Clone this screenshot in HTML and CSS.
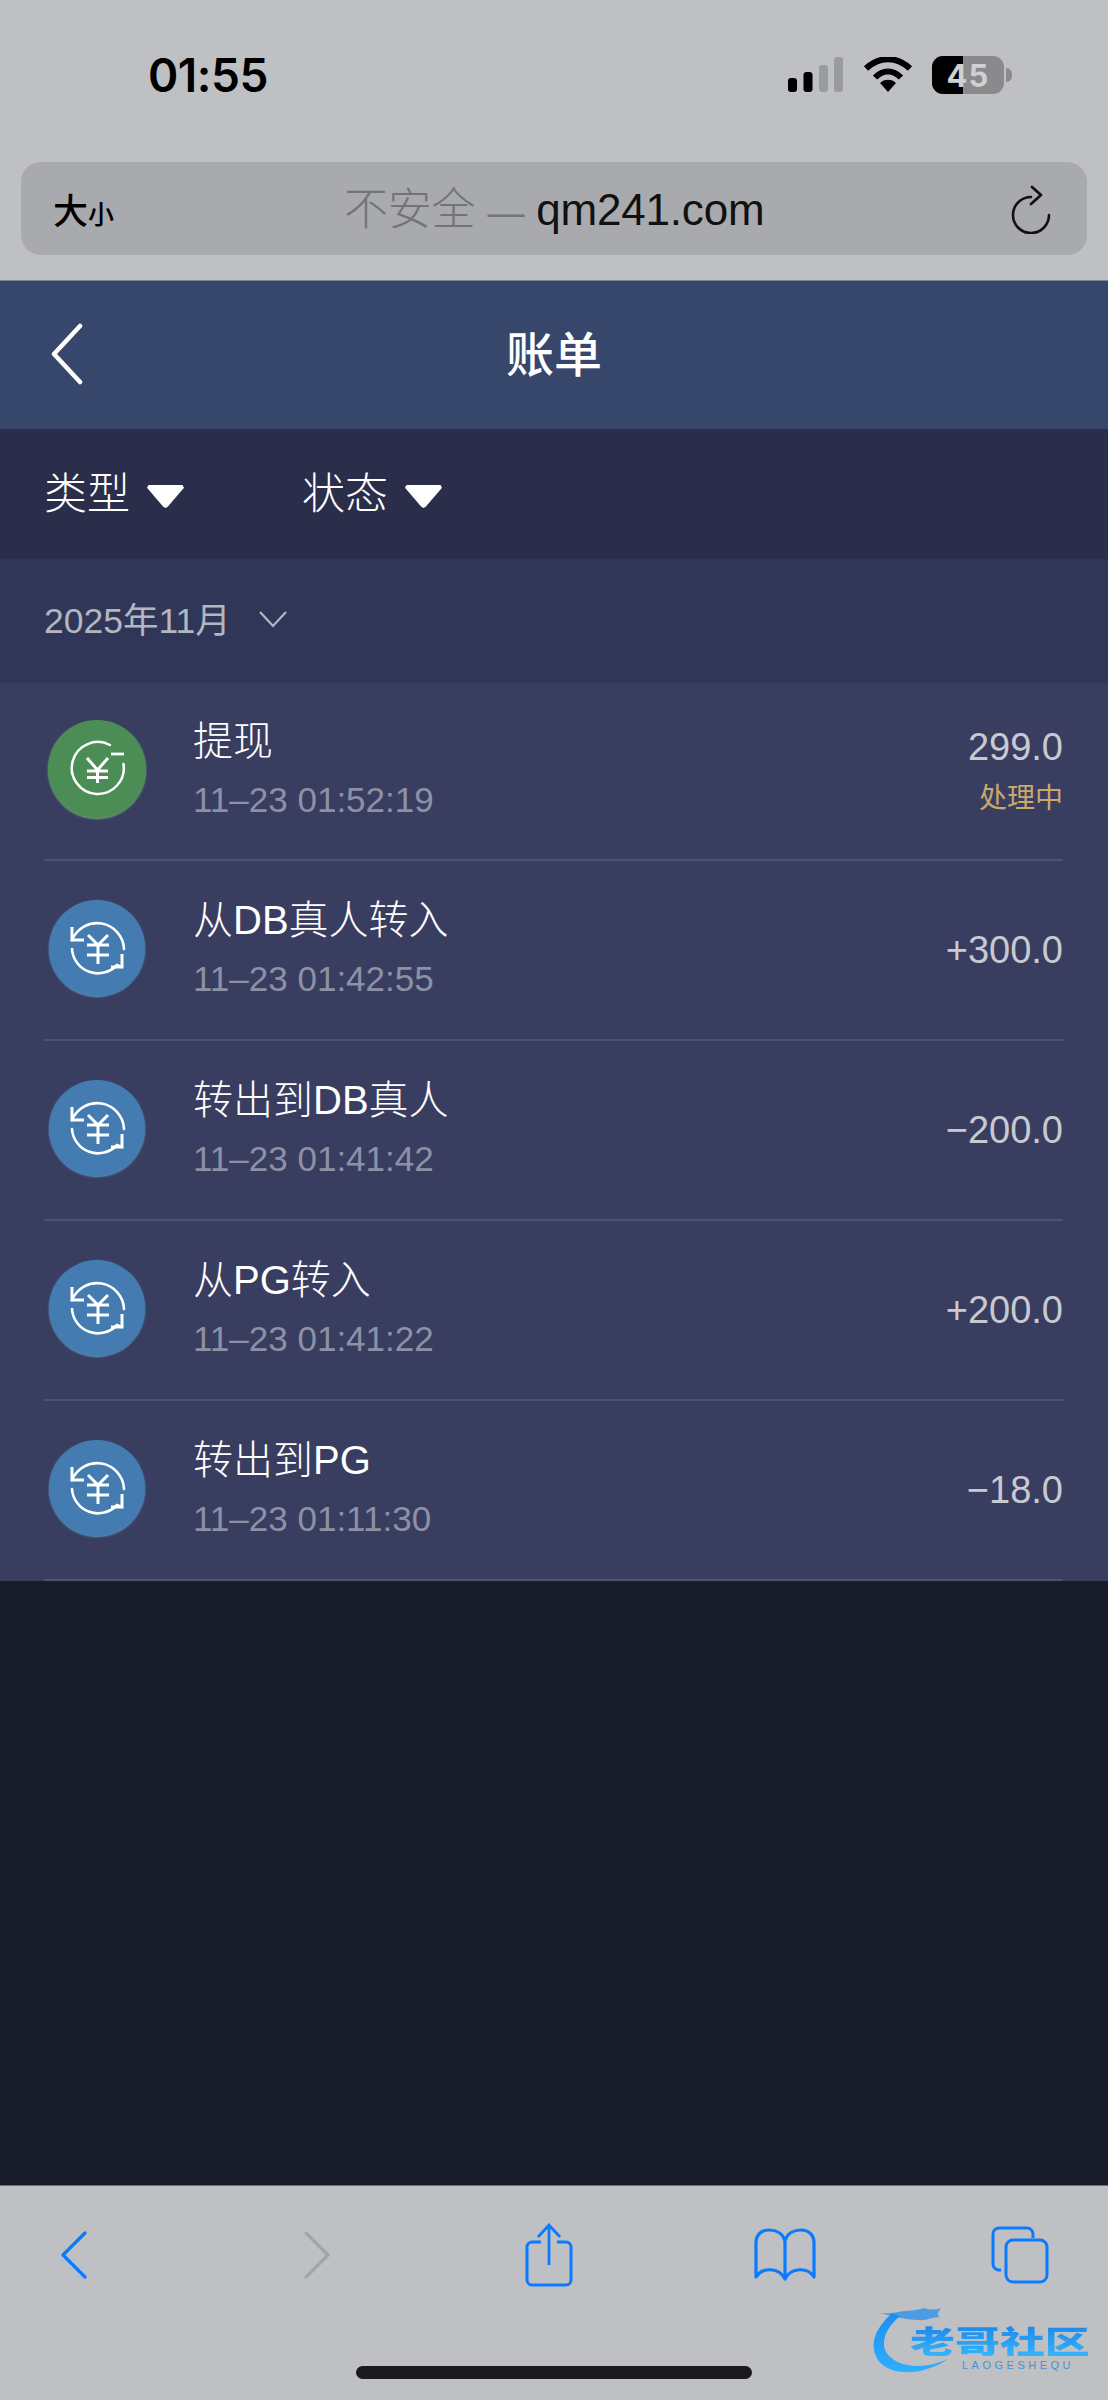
FILE: index.html
```html
<!DOCTYPE html>
<html lang="zh-CN">
<head>
<meta charset="utf-8">
<title>账单</title>
<link rel="stylesheet" href="styles.css">
</head>
<body>
<div class="screen">
  <div class="chrome-top">
    <div class="status">
      <span class="time">01:55</span>
      <div class="status-icons">
        <svg class="signal" width="56" height="36" viewBox="0 0 56 36"><rect x="0" y="21" width="9" height="14" rx="3" fill="#000"/><rect x="15.500" y="15" width="9" height="20" rx="3" fill="#000"/><rect x="31" y="8" width="9" height="27" rx="3" fill="#9a9b9e"/><rect x="46" y="0" width="9" height="35" rx="3" fill="#9a9b9e"/></svg>
        <svg class="wifi" width="50" height="36" viewBox="0 0 50 36"><path d="M3 11.500C16 -1 34 -1 47 11.500" fill="none" stroke="#000" stroke-width="6"/><path d="M12 20.500C20 12.500 30 12.500 38 20.500" fill="none" stroke="#000" stroke-width="6"/><path d="M17 26C21 21.500 29 21.500 33 26L25 35Z" fill="#000"/></svg>
        <div class="battery">
          <span class="battery-fill"></span>
          <span class="battery-text">45</span>
        </div>
        <span class="battery-tip"></span>
      </div>
    </div>
    <div class="urlbar">
      <span class="textsize">大<small>小</small></span>
      <span class="url"><span class="url-muted">不安全 <span class="url-dash">—</span> </span>qm241.com</span>
      <svg class="reload" width="42" height="50" viewBox="0 0 42 50"><path d="M20 13A18 18 0 1 0 38 31" fill="none" stroke="#111" stroke-width="2.600" stroke-linecap="round"/><path d="M21 3L30 11L20 20" fill="none" stroke="#111" stroke-width="2.800" stroke-linecap="round" stroke-linejoin="round"/></svg>
    </div>
  </div>

  <header class="nav">
    <svg class="nav-back" width="34" height="62" viewBox="0 0 34 62"><path d="M30 3L4 31L30 59" fill="none" stroke="#fff" stroke-width="4.500" stroke-linecap="round" stroke-linejoin="round"/></svg>
    <h1 class="nav-title">账单</h1>
  </header>

  <div class="filters">
    <div class="filter"><span>类型</span><i class="caret"></i></div>
    <div class="filter"><span>状态</span><i class="caret"></i></div>
  </div>

  <div class="month">
    <span>2025年11月</span>
    <svg class="month-chevron" width="30" height="18" viewBox="0 0 30 18"><path d="M2 2L15 16L28 2" fill="none" stroke="#b4b6c0" stroke-width="2.200"/></svg>
  </div>

  <ul class="list">
    <li class="row">
      <span class="badge badge-green">
        <svg width="60" height="60" viewBox="0 0 60 60"><path d="M43 6A26 26 0 1 0 56.500 25" fill="none" stroke="#fff" stroke-width="2.500" stroke-linecap="round"/><path d="M44 15H57" stroke="#fff" stroke-width="2.800"/><path d="M20 19L30.500 31L41 19M30.500 31V44M20 32H41M20 38.500H41" fill="none" stroke="#fff" stroke-width="3"/></svg>
      </span>
      <div class="info info-green"><div class="title">提现</div><div class="date">11–23 01:52:19</div></div>
      <div class="amount"><div class="value">299.0</div><div class="state">处理中</div></div>
    </li>
    <li class="row">
      <span class="badge badge-blue">
        <svg width="60" height="60" viewBox="0 0 60 60"><use href="#swap"/></svg>
      </span>
      <div class="info"><div class="title">从DB真人转入</div><div class="date">11–23 01:42:55</div></div>
      <div class="amount"><div class="value">+300.0</div></div>
    </li>
    <li class="row">
      <span class="badge badge-blue">
        <svg width="60" height="60" viewBox="0 0 60 60"><use href="#swap"/></svg>
      </span>
      <div class="info"><div class="title">转出到DB真人</div><div class="date">11–23 01:41:42</div></div>
      <div class="amount"><div class="value">−200.0</div></div>
    </li>
    <li class="row">
      <span class="badge badge-blue">
        <svg width="60" height="60" viewBox="0 0 60 60"><use href="#swap"/></svg>
      </span>
      <div class="info"><div class="title">从PG转入</div><div class="date">11–23 01:41:22</div></div>
      <div class="amount"><div class="value">+200.0</div></div>
    </li>
    <li class="row">
      <span class="badge badge-blue">
        <svg width="60" height="60" viewBox="0 0 60 60"><use href="#swap"/></svg>
      </span>
      <div class="info"><div class="title">转出到PG</div><div class="date">11–23 01:11:30</div></div>
      <div class="amount"><div class="value">−18.0</div></div>
    </li>
  </ul>

  <div class="empty"></div>

  <footer class="toolbar">
    <div class="tools">
      <svg width="28" height="48" viewBox="0 0 28 48"><path d="M25 2L3 24L25 46" fill="none" stroke="#0a7aff" stroke-width="3.200" stroke-linecap="round" stroke-linejoin="round"/></svg>
      <svg width="28" height="48" viewBox="0 0 28 48"><path d="M3 2L25 24L3 46" fill="none" stroke="#a3a4a8" stroke-width="3.200" stroke-linecap="round" stroke-linejoin="round"/></svg>
      <svg width="48" height="64" viewBox="0 0 48 64"><path d="M16 19H7A5 5 0 0 0 2 24V57A5 5 0 0 0 7 62H41A5 5 0 0 0 46 57V24A5 5 0 0 0 41 19H32" fill="none" stroke="#0a7aff" stroke-width="3"/><path d="M24 2V42M13 14L24 2L35 14" fill="none" stroke="#0a7aff" stroke-width="2.800"/></svg>
      <svg width="62" height="54" viewBox="0 0 62 54"><path d="M31 13C29 5 22 2 15 2C7 2 2 7 2 15V49C8 39 25 39 31 51C37 39 54 39 60 49V15C60 7 55 2 47 2C40 2 33 5 31 13ZM31 13V51" fill="none" stroke="#0a7aff" stroke-width="3.200" stroke-linejoin="round"/></svg>
      <svg width="58" height="58" viewBox="0 0 58 58"><path d="M10 44H8A6 6 0 0 1 2 38V8A6 6 0 0 1 8 2H36A6 6 0 0 1 42 8V12" fill="none" stroke="#0a7aff" stroke-width="3"/><rect x="15" y="14" width="41" height="42" rx="7" fill="none" stroke="#0a7aff" stroke-width="3"/></svg>
    </div>
    <div class="home-indicator"></div>
    <div class="watermark">
      <svg class="watermark-dragon" width="112" height="76" viewBox="0 0 112 76"><defs><linearGradient id="dragon" x1="0" y1="0" x2="0" y2="1"><stop offset="0" stop-color="#1c8df0"/><stop offset="1" stop-color="#2fb0ff"/></linearGradient></defs><path d="M22 11C6 26 -2 42 8 58C18 73 50 76 78 57C54 68 26 66 16 50C10 38 18 24 30 14Z" fill="url(#dragon)"/><path d="M1 9C14 13 24 11 34 9C40 9 48 8 54 6C60 8 66 8 71 6C68 11 66 12 70 15C62 15 56 19 48 18C36 18 22 14 1 9Z" fill="#1c8df0" opacity=".7"/></svg>
      <span class="watermark-cn">老哥社区</span>
      <span class="watermark-en">LAOGESHEQU</span>
    </div>
  </footer>
</div>

<svg class="defs" width="0" height="0">
  <symbol id="swap" viewBox="0 0 60 60">
    <path d="M5 22A27 27 0 0 1 57 31" fill="none" stroke="#fff" stroke-width="2.600" stroke-linecap="round"/>
    <path d="M5 31A26 26 0 0 0 50 47L55 49" fill="none" stroke="#fff" stroke-width="2.600" stroke-linecap="round"/>
    <path d="M5 9V22H17" fill="none" stroke="#fff" stroke-width="3"/>
    <path d="M55 36V49H44" fill="none" stroke="#fff" stroke-width="3"/>
    <path d="M21 17L31 27L41 17M31 27V46M20 27H42M20 37H42" fill="none" stroke="#fff" stroke-width="3"/>
  </symbol>
</svg>
</body>
</html>
```
FILE: styles.css
```css
* { box-sizing: border-box; }
html, body { margin: 0; padding: 0; }
body { font-family: "Liberation Sans", "Noto Sans CJK SC", sans-serif; background: #191c2a; }
.screen { width: 1108px; height: 2400px; display: flex; flex-direction: column; overflow: hidden; position: relative; }

.chrome-top { height: 281px; background: #bfc0c4; padding-top: 49px; border-bottom: 1px solid #7f8494; }
.status { height: 52px; display: flex; justify-content: space-between; align-items: center; padding: 0 96px 0 148px; }
.time { font-family: Inter, "Liberation Sans", sans-serif; font-weight: 600; font-size: 46px; color: #000; letter-spacing: -0.500px; }
.status-icons { display: flex; align-items: center; }
.signal { margin-right: 19px; }
.wifi { margin-right: 19px; }
.battery { width: 72px; height: 38px; border-radius: 11px; background: #8a8a8c; position: relative; overflow: hidden; display: flex; align-items: center; justify-content: center; }
.battery-fill { position: absolute; left: 0; top: 0; bottom: 0; width: 31px; background: #000; }
.battery-text { position: relative; font-family: Inter, sans-serif; font-weight: 700; font-size: 31px; color: #cfd0d3; letter-spacing: 1px; }
.battery-tip { width: 6px; height: 14px; margin-left: 2px; background: #8a8a8c; border-radius: 0 6px 6px 0; }

.urlbar { margin: 61px 21px 0; height: 93px; background: #a9aaae; border-radius: 20px; display: flex; align-items: center; justify-content: space-between; padding: 0 34px 0 32px; position: relative; }
.textsize { font-size: 35px; font-weight: 500; color: #000; display: flex; align-items: baseline; font-family: "Noto Sans CJK SC", sans-serif; }
.textsize small { font-size: 26px; }
.url { position: absolute; left: 323px; top: 20px; font-size: 44px; line-height: 56px; color: #111; white-space: nowrap; letter-spacing: -0.200px; }
.url-muted { color: #737477; font-weight: 300; }
.url-dash { font-size: 37px; }

.nav { height: 148px; background: #37466b; display: flex; align-items: center; justify-content: center; position: relative; }
.nav-back { position: absolute; left: 50px; top: 42px; }
.nav-title { margin: 0; font-size: 48px; font-weight: 500; color: #fff; line-height: 1; font-family: "Noto Sans CJK SC", sans-serif; position: relative; top: -4px; }

.filters { height: 130px; background: #2a2e4a; display: flex; align-items: center; padding: 0 0 8px 44px; }
.filter { width: 258px; display: flex; align-items: center; font-size: 43px; color: #fff; font-family: "Noto Sans CJK SC", sans-serif; font-weight: 300; }
.caret { width: 37px; height: 23px; margin-left: 17px; margin-top: 13px; background: #fff; clip-path: polygon(4% 0, 96% 0, 100% 12%, 56% 95%, 50% 100%, 44% 95%, 0 12%); }

.month { height: 124px; background: #303657; display: flex; align-items: center; padding: 0 0 8px 44px; font-size: 35.500px; color: #b4b6c0; }
.month-chevron { margin-left: 27px; margin-top: 4px; }

.list { list-style: none; margin: 0; padding: 0 45px 0 44px; background: #393e61; }
.row { height: 180px; border-bottom: 2px solid #4d5270; display: flex; align-items: center; }
.row:first-child { height: 178px; }
.row:first-child .amount { margin-top: -3px; }
.badge { width: 96px; height: 96px; margin: 0 0 4px 5px; border-radius: 50%; display: flex; align-items: center; justify-content: center; flex: none; }
.badge-green { width: 98px; height: 98px; margin-left: 4px; background: #4b8d55; box-shadow: 0 1px 2px #6fa77d; }
.badge-blue { background: #447bb1; box-shadow: 0 1px 2px #5c9ac4; }
.info { margin: -7px 0 0 48px; flex: 1; }
.info-green { margin-left: 47px; }
.title { font-size: 40px; line-height: 54px; color: #fff; font-weight: 300; }
.date { font-size: 35px; line-height: 44px; margin-top: 10px; color: #8d91a5; }
.amount { text-align: right; }
.value { font-size: 38px; line-height: 44px; color: #c9cad1; }
.state { font-size: 28px; line-height: 36px; margin-top: 9px; color: #c9a96a; font-family: "Noto Sans CJK SC", sans-serif; }

.empty { flex: 1; background: #191c2a; }

.toolbar { height: 215px; background: #bfc0c4; border-top: 1px solid #6e7079; position: relative; }
.tools { display: grid; grid-template-columns: 148px 338px 126px 346px 124px; justify-items: center; align-items: center; height: 129px; padding-top: 8px; }
.home-indicator { position: absolute; left: 356px; bottom: 21px; width: 396px; height: 13px; border-radius: 7px; background: #1a1a1c; }

.watermark { position: absolute; left: 870px; top: 116px; width: 225px; height: 80px; }
.watermark-dragon { position: absolute; left: 0; top: 0; }
.watermark-cn { position: absolute; left: 40px; top: 22px; font-family: "Noto Sans CJK SC", sans-serif; font-weight: 900; font-size: 31px; line-height: 32px; white-space: nowrap; color: transparent; background: linear-gradient(#1b86ea, #35b4ff); -webkit-background-clip: text; background-clip: text; transform: scaleX(1.45); transform-origin: left center; }
.watermark-en { position: absolute; left: 92px; top: 57px; font-size: 11px; line-height: 12px; letter-spacing: 3.500px; color: #4a8fd0; white-space: nowrap; }

.defs { position: absolute; }
```
